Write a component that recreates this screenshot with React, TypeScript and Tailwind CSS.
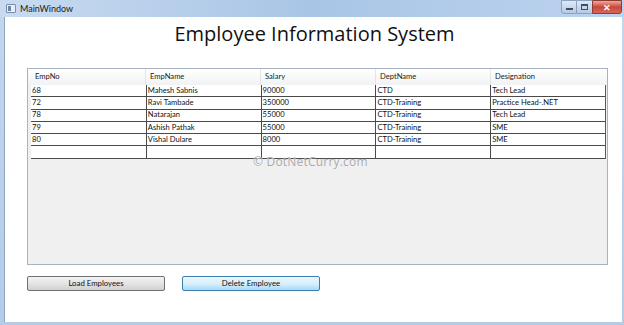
import React from 'react';

const cols = ['EmpNo', 'EmpName', 'Salary', 'DeptName', 'Designation'];

const rows = [
  ['68', 'Mahesh Sabnis', '90000', 'CTD', 'Tech Lead'],
  ['72', 'Ravi Tambade', '350000', 'CTD-Training', 'Practice Head-.NET'],
  ['78', 'Natarajan', '55000', 'CTD-Training', 'Tech Lead'],
  ['79', 'Ashish Pathak', '55000', 'CTD-Training', 'SME'],
  ['80', 'Vishal Dulare', '8000', 'CTD-Training', 'SME'],
  ['', '', '', '', ''],
];

export default function App() {
  return (
    <div className="flex h-[325px] w-[624px] flex-col overflow-hidden bg-gradient-to-b from-[#c3d7ee] to-[#b4cce8] font-['Open_Sans',sans-serif] text-black">
      {/* title bar */}
      <div className="relative flex h-[17px] shrink-0 items-center bg-gradient-to-r from-[#c8dbf0] via-[#a9c5e6] to-[#bcd3ee]">
        <div className="ml-[6px] flex h-[9px] w-[10px] items-center rounded-[1px] border border-[#7a8ea8] bg-[#e8eef6]">
          <div className="ml-[1px] h-[5px] w-[3px] bg-[#6c86a8]" />
        </div>
        <span className="ml-[4px] font-['Lato',sans-serif] text-[9px] leading-none text-[#1a1a1a]">MainWindow</span>
        <div className="absolute right-[2px] top-0 flex h-[14px]">
          <div className="flex w-[16px] items-end justify-center rounded-bl-[3px] border border-[#8aa2c0] bg-gradient-to-b from-[#dfe9f5] to-[#b4c9e3] pb-[3px]">
            <div className="h-[2px] w-[7px] bg-[#3d4f66]" />
          </div>
          <div className="flex w-[15px] items-center justify-center border-y border-[#8aa2c0] bg-gradient-to-b from-[#dfe9f5] to-[#b4c9e3]">
            <div className="h-[6px] w-[7px] border border-t-2 border-[#3d4f66]" />
          </div>
          <div className="flex w-[30px] items-center justify-center rounded-br-[3px] border border-[#8d3b33] bg-gradient-to-b from-[#e8a99f] via-[#c9463a] to-[#d9665a] text-[9px] font-bold leading-none text-white">
            ✕
          </div>
        </div>
      </div>

      {/* window body */}
      <div className="flex flex-1 pb-[3px] pl-[4px] pr-[2px]">
        <div className="relative flex flex-1 flex-col border-l border-[#8fa6c2] bg-white">
          <div className="flex h-[29px] items-end justify-center pl-[2px]">
            <h1 className="text-[20px] leading-[24px] text-[#111]">Employee Information System</h1>
          </div>

          {/* data grid */}
          <div className="ml-[22px] mt-[22px] flex h-[197px] w-[581px] flex-col border border-[#a7b3c2] bg-[#f0f0f0] font-['Lato',sans-serif]">
            <div className="flex h-[16px] bg-gradient-to-b from-white to-[#f1f2f4] pl-[3px]">
              {cols.map((c, i) => (
                <div
                  key={c}
                  className={`flex w-[115px] items-center border-r border-[#e2e4e7] pl-[4px] text-[7.6px] leading-none text-[#222] ${i === 4 ? 'border-r-0' : ''}`}
                >
                  {c}
                </div>
              ))}
            </div>
            <div className="ml-[3px] w-[575px] border-r border-[#5a5a5a] bg-white">
              {rows.map((r, ri) => (
                <div key={ri} className="flex h-[12.3px] border-b border-[#4a4a4a]">
                  {r.map((v, ci) => (
                    <div
                      key={ci}
                      className={`flex w-[115px] items-center pl-[1px] text-[7.6px] leading-none text-[#111] ${ci > 0 ? 'border-l border-[#4a4a4a]' : ''}`}
                    >
                      {v}
                    </div>
                  ))}
                </div>
              ))}
            </div>
          </div>

          <div className="pointer-events-none absolute left-[248px] top-[139px] text-[12px] leading-none tracking-[0.2px] text-[#a8a8a8] [text-shadow:0_0_1px_#ffffff]">
            © DotNetCurry.com
          </div>

          {/* buttons */}
          <div className="ml-[22px] mt-[11px] flex gap-[17px] font-['Lato',sans-serif]">
            <button className="flex h-[15px] w-[138px] items-center justify-center rounded-[2px] border border-[#707070] bg-gradient-to-b from-[#f3f3f3] via-[#e4e4e4] to-[#d0d0d0] text-[7.8px] leading-none text-[#111]">
              Load Employees
            </button>
            <button className="flex h-[15px] w-[138px] items-center justify-center rounded-[2px] border border-[#3c7fb1] bg-gradient-to-b from-[#eaf6fd] via-[#d9f0fc] to-[#a7d9f5] text-[7.8px] leading-none text-[#111]">
              Delete Employee
            </button>
          </div>
        </div>
      </div>
    </div>
  );
}
